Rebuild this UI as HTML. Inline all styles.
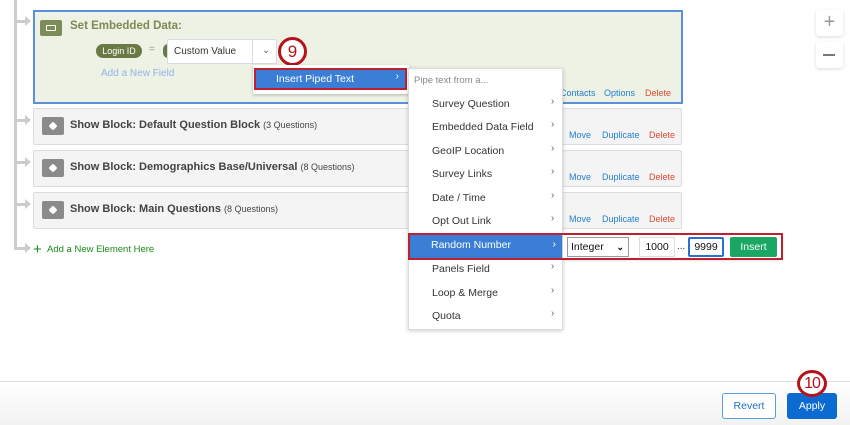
<!DOCTYPE html>
<html><head><meta charset="utf-8"><style>
*{box-sizing:border-box;margin:0;padding:0}
body{width:850px;height:425px;overflow:hidden;background:#fff;font-family:"Liberation Sans",sans-serif;position:relative;font-size:10px}
.a{position:absolute}
.vline{left:14px;top:0;width:3px;height:250px;background:#ccc}
.arr{left:14px;width:14px;height:3px;background:#ccc}
.arr:after{content:"";position:absolute;right:-3px;top:-4px;border-left:6px solid #ccc;border-top:5px solid transparent;border-bottom:5px solid transparent}
.blk{left:33px;width:649px;height:37px;background:#f4f4f4;border:1px solid #ddd;border-radius:2px}
.bi{left:8px;top:8px;width:22px;height:18px;background:#8a8a8a;border-radius:2px}
.bi:after{content:"";position:absolute;left:7px;top:5px;width:8px;height:8px;background:#fff;border-radius:2px;transform:rotate(45deg) scale(.8)}
.bt{left:36px;top:10px;font-size:11px;font-weight:bold;color:#444;white-space:nowrap}
.bt span{font-weight:normal;font-size:9px}
.lk{font-size:9px;color:#1f7ecf}
.dl{font-size:9px;color:#e04a2f}
.mi{left:23px;font-size:10.5px;color:#333}
.mc{left:142px;font-size:10px;color:#666}
</style></head><body>
<div class="a vline"></div>
<div class="a arr" style="top:20px"></div>
<div class="a arr" style="top:119px"></div>
<div class="a arr" style="top:161px"></div>
<div class="a arr" style="top:203px"></div>
<div class="a arr" style="top:247px"></div>

<div class="a" style="left:33px;top:10px;width:650px;height:94px;background:#eef2e5;border:2px solid #5b8fdc"></div>
<div class="a" style="left:40px;top:20px;width:22px;height:16px;background:#7d8c58;border-radius:2px"><div class="a" style="left:6px;top:5px;width:10px;height:6px;border:1px solid #fff;border-radius:1px"></div></div>
<div class="a" style="left:70px;top:20px;font-size:11.5px;font-weight:bold;color:#7c8a56">Set Embedded Data:</div>
<div class="a" style="left:96px;top:44px;width:46px;height:14px;background:#6b7a45;border-radius:7px;color:#fff;font-size:9px;text-align:center;line-height:14px">Login ID</div>
<div class="a" style="left:149px;top:44px;color:#999;font-size:10px">=</div>
<div class="a" style="left:163px;top:44px;width:10px;height:14px;background:#6b7a45;border-radius:7px"></div>
<div class="a" style="left:167px;top:39px;width:110px;height:25px;background:#fff;border:1px solid #d7dbe5;border-radius:2px">
<div class="a" style="left:6px;top:6px;font-size:10px;color:#333">Custom Value</div>
<div class="a" style="left:84px;top:-1px;width:1px;height:25px;background:#d7dbe5"></div>
<div class="a" style="left:94px;top:5px;font-size:10px;color:#666">&#8964;</div>
</div>
<div class="a" style="left:278px;top:37px;width:29px;height:29px;border:3px solid #b5121b;border-radius:50%;background:#fff;color:#b5121b;font-size:17px;text-align:center;line-height:23px">9</div>
<div class="a" style="left:101px;top:68px;font-size:10px;color:#8fb3e8">Add a New Field</div>
<div class="a lk" style="left:560px;top:88px">Contacts</div>
<div class="a lk" style="left:604px;top:88px">Options</div>
<div class="a dl" style="left:645px;top:88px">Delete</div>

<div class="a blk" style="top:108px"><div class="a bi"></div><div class="a bt">Show Block: Default Question Block <span>(3 Questions)</span></div></div>
<div class="a blk" style="top:150px"><div class="a bi"></div><div class="a bt">Show Block: Demographics Base/Universal <span>(8 Questions)</span></div></div>
<div class="a blk" style="top:192px"><div class="a bi"></div><div class="a bt">Show Block: Main Questions <span>(8 Questions)</span></div></div>
<div class="a lk" style="left:569px;top:130px">Move</div><div class="a lk" style="left:602px;top:130px">Duplicate</div><div class="a dl" style="left:649px;top:130px">Delete</div>
<div class="a lk" style="left:569px;top:172px">Move</div><div class="a lk" style="left:602px;top:172px">Duplicate</div><div class="a dl" style="left:649px;top:172px">Delete</div>
<div class="a lk" style="left:569px;top:214px">Move</div><div class="a lk" style="left:602px;top:214px">Duplicate</div><div class="a dl" style="left:649px;top:214px">Delete</div>
<div class="a" style="left:33px;top:241px;font-size:15px;color:#1a8a1a">+</div>
<div class="a" style="left:47px;top:244px;font-size:9.5px;color:#1a8a1a">Add a New Element Here</div>

<div class="a" style="left:253px;top:65px;width:156px;height:29px;background:#fff;box-shadow:0 1px 3px rgba(0,0,0,.25)"></div>
<div class="a" style="left:254px;top:68px;width:153px;height:22px;background:#3a7fd5;border:2px solid #c0202e;color:#fff;font-size:10.5px;line-height:18px;padding-left:20px">Insert Piped Text<span style="position:absolute;right:6px;top:-2px;font-size:10px">&#8250;</span></div>

<div class="a" style="left:408px;top:68px;width:155px;height:262px;background:#fff;border:1px solid #ddd;box-shadow:0 1px 4px rgba(0,0,0,.2)">
<div class="a" style="left:5px;top:6px;font-size:9.5px;color:#888">Pipe text from a...</div>
<div class="a mi" style="top:29px">Survey Question</div><div class="a mc" style="top:27px">&#8250;</div>
<div class="a mi" style="top:52px">Embedded Data Field</div><div class="a mc" style="top:50px">&#8250;</div>
<div class="a mi" style="top:76px">GeoIP Location</div><div class="a mc" style="top:74px">&#8250;</div>
<div class="a mi" style="top:99px">Survey Links</div><div class="a mc" style="top:97px">&#8250;</div>
<div class="a mi" style="top:123px">Date / Time</div><div class="a mc" style="top:121px">&#8250;</div>
<div class="a mi" style="top:146px">Opt Out Link</div><div class="a mc" style="top:144px">&#8250;</div>
<div class="a mi" style="top:194px">Panels Field</div><div class="a mc" style="top:192px">&#8250;</div>
<div class="a mi" style="top:218px">Loop &amp; Merge</div><div class="a mc" style="top:216px">&#8250;</div>
<div class="a mi" style="top:241px">Quota</div><div class="a mc" style="top:239px">&#8250;</div>
</div>
<div class="a" style="left:563px;top:234px;width:219px;height:25px;background:#fff;box-shadow:0 1px 3px rgba(0,0,0,.2)"></div>
<div class="a" style="left:408px;top:233px;width:375px;height:27px;border:2px solid #c0202e"></div>
<div class="a" style="left:410px;top:235px;width:152px;height:23px;background:#3a7fd5;color:#fff;font-size:10.5px;line-height:20px;padding-left:21px">Random Number<span style="position:absolute;right:6px;top:-1px">&#8250;</span></div>
<div class="a" style="left:567px;top:237px;width:62px;height:20px;border:1px solid #999;background:#fff;font-size:10.5px;line-height:18px;padding-left:3px;color:#111">Integer<span style="position:absolute;right:4px;top:0;font-size:9px;font-weight:bold">&#8964;</span></div>
<div class="a" style="left:639px;top:237px;width:36px;height:20px;border:1px solid #ddd;font-size:10.5px;line-height:18px;text-align:center;color:#111">1000</div>
<div class="a" style="left:677px;top:241px;font-size:10px;color:#333">...</div>
<div class="a" style="left:688px;top:237px;width:36px;height:20px;border:2px solid #2a6fd0;border-radius:2px;font-size:10.5px;line-height:16px;text-align:center;color:#111">9999</div>
<div class="a" style="left:730px;top:237px;width:47px;height:20px;background:#1aa763;border-radius:2px;color:#fff;font-size:10.5px;line-height:20px;text-align:center">Insert</div>

<div class="a" style="left:816px;top:10px;width:27px;height:26px;background:#fff;border-radius:3px;box-shadow:0 1px 3px rgba(0,0,0,.15);color:#999;font-size:20px;text-align:center;line-height:24px">+</div>
<div class="a" style="left:816px;top:42px;width:27px;height:26px;background:#fff;border-radius:3px;box-shadow:0 1px 3px rgba(0,0,0,.15)"><div class="a" style="left:7px;top:12px;width:12px;height:2px;background:#777"></div></div>

<div class="a" style="left:0;top:381px;width:850px;height:44px;background:linear-gradient(#fff,#f2f2f2);border-top:1px solid #ddd"></div>
<div class="a" style="left:722px;top:393px;width:54px;height:26px;border:1px solid #5b9be0;border-radius:3px;background:#fff;color:#1f6fc6;font-size:10.5px;text-align:center;line-height:24px">Revert</div>
<div class="a" style="left:787px;top:393px;width:50px;height:26px;background:#0b6bd0;border-radius:3px;color:#fff;font-size:10.5px;text-align:center;line-height:26px">Apply</div>
<div class="a" style="left:797px;top:370px;width:30px;height:27px;border:3px solid #b5121b;border-radius:50%;background:rgba(255,255,255,.9);color:#b5121b;font-size:16px;text-align:center;line-height:21px;letter-spacing:-1px">10</div>
</body></html>
